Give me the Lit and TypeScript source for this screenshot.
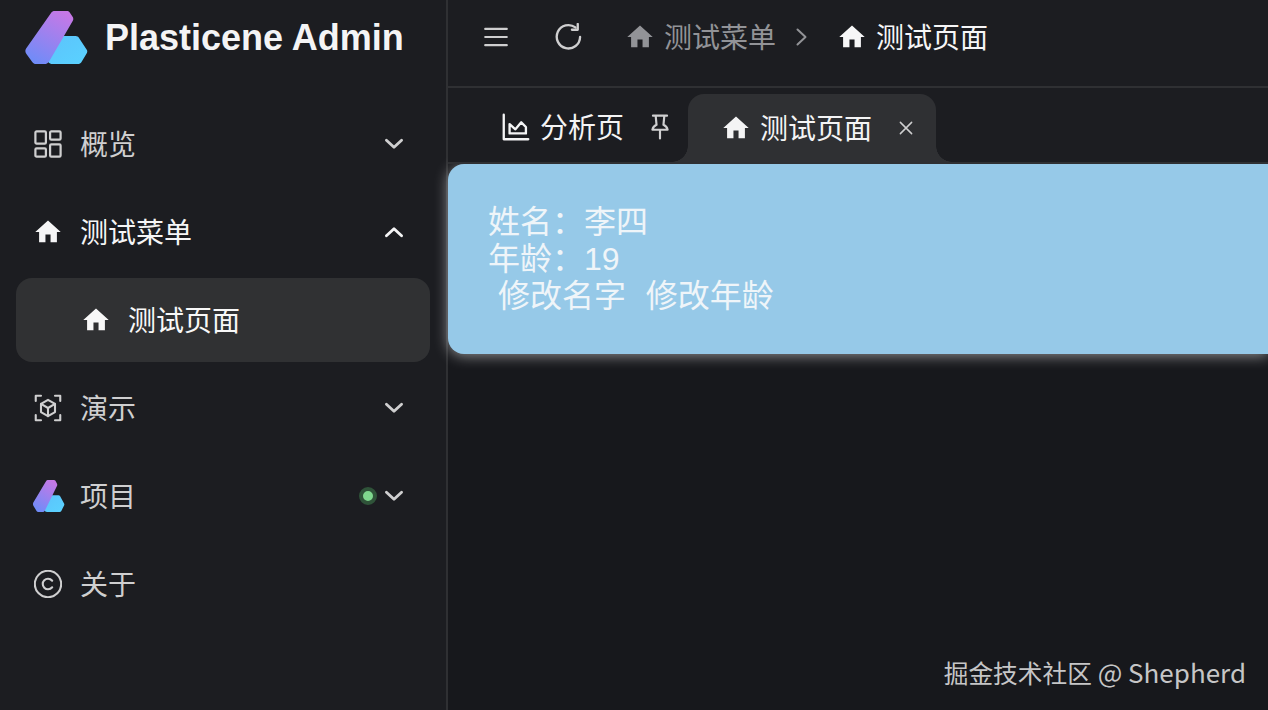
import { LitElement, html, css, svg } from "lit";
import { customElement } from "lit/decorators.js";

const home = svg`<path fill="currentColor" d="M10 20v-6h4v6h5v-8h3L12 3 2 12h3v8z"/>`;
const chevDown = svg`<path fill="none" stroke="currentColor" stroke-width="2.6" stroke-linecap="round" stroke-linejoin="round" d="M5 8.500l7 6.500 7-6.500"/>`;
const chevUp = svg`<path fill="none" stroke="currentColor" stroke-width="2.6" stroke-linecap="round" stroke-linejoin="round" d="M5 15.500l7-6.500 7 6.500"/>`;
const grid = svg`<g fill="none" stroke="currentColor" stroke-width="1.9"><rect x="1.200" y="1.200" width="9" height="10.500" rx="1"/><rect x="1.200" y="15.800" width="9" height="7" rx="1"/><rect x="13.800" y="1.200" width="9" height="7" rx="1"/><rect x="13.800" y="12.300" width="9" height="10.500" rx="1"/></g>`;
const cube = svg`<g fill="none" stroke="currentColor" stroke-width="1.800" stroke-linejoin="round" stroke-linecap="round"><path d="M6 1.500H1.500V6M18 1.500h4.500V6M6 22.500H1.500V18M18 22.500h4.500V18"/><path d="M12 5l6 3.500v7L12 19l-6-3.500v-7z"/><path d="M6 8.500l6 3.500 6-3.500M12 12v7"/></g>`;
const copyright = svg`<g fill="none" stroke="currentColor" stroke-width="1.800"><circle cx="12" cy="12" r="11.300"/><path stroke-linecap="round" d="M15.600 9.200A4.600 4.600 0 0 0 12 7.500a4.500 4.500 0 0 0 0 9 4.600 4.600 0 0 0 3.600-1.700"/></g>`;
const menu = svg`<path fill="none" stroke="currentColor" stroke-width="1.900" stroke-linecap="round" d="M2 4.500h20M2 12h20M2 19.500h20"/>`;
const refresh = svg`<g fill="none" stroke="currentColor" stroke-width="2" stroke-linecap="round" stroke-linejoin="round"><path d="M21.500 12A10 10 0 1 1 17.500 3.800"/><path d="M19.500 0.800v5h-5"/></g>`;
const chevRight = svg`<path fill="none" stroke="currentColor" stroke-width="2" stroke-linecap="round" stroke-linejoin="round" d="M8.500 4.500l8 7.500-8 7.500"/>`;
const chart = svg`<g fill="none" stroke="currentColor" stroke-width="2" stroke-linejoin="round" stroke-linecap="round"><path d="M1.500 1.500v21h21"/><path d="M6.500 17.500v-8l5 4.500 5-6 4 4v5.500z"/></g>`;
const pin = svg`<g fill="none" stroke="currentColor" stroke-width="2" stroke-linejoin="round" stroke-linecap="round"><path d="M5.500 1.500h13M8 1.500l.8 8.500c-2 1-3.300 2.300-3.800 4.500h14c-.5-2.200-1.800-3.500-3.800-4.500l.8-8.500M12 14.500v8"/></g>`;
const close = svg`<path fill="none" stroke="currentColor" stroke-width="2" stroke-linecap="round" d="M4.500 4.500l15 15M19.500 4.500l-15 15"/>`;

const logo = (id: string) => svg`
  <defs>
    <linearGradient id="${id}a" x1="0.75" y1="0" x2="0.25" y2="1"><stop offset="0" stop-color="#c678e6"/><stop offset="1" stop-color="#6f8cf8"/></linearGradient>
    <linearGradient id="${id}b" x1="0" y1="0" x2="1" y2="1"><stop offset="0" stop-color="#5cc3fb"/><stop offset="1" stop-color="#5ad2ff"/></linearGradient>
  </defs>
  <path fill="url(#${id}b)" d="M26 26.500c.9-1.400 1.900-1.900 3.300-1.900h20c1.400 0 2.600.7 3.300 1.900l7.600 11.500c.7 1.100.7 2.300 0 3.400l-5.300 8.800c-.8 1.200-1.900 1.800-3.300 1.800H27c-2.300 0-3.600-.6-4.800-2.300-.9-1.300-.5-3.100.3-4.500z"/>
  <path fill="url(#${id}a)" d="M25.500 1.500c.8-1 1.800-1.500 3-1.500h12c1.200 0 2.300.5 3 1.400l2.800 4.200c.9 1.300.9 3 .1 4.300L23.700 48.700c-1.300 2.100-2.800 3.300-5.300 3.300h-7.500c-1.700 0-3-.5-4-1.800L1 42.200c-1.300-1.700-1.400-3.600-.3-5.500z"/>`;

@customElement("app-root")
export class AppRoot extends LitElement {
  static styles = css`
    :host {
      display: block;
      width: 100%;
      height: 710px;
      overflow: hidden;
      font-family: "Noto Sans CJK SC", "Noto Sans", sans-serif;
    }
    svg { display: block; flex: none; }
    .app { display: flex; height: 710px; background: #17181c; position: relative; overflow: hidden; }
    .side {
      flex: none;
      width: 446px;
      border-right: 2px solid #2f3033;
      background: #1c1d21;
      display: flex;
      flex-direction: column;
      color: #cfcfd0;
    }
    .brand { height: 76px; display: flex; align-items: center; padding-left: 25px; gap: 16px; }
    .brand svg { margin-top: -2px; width: 64px; height: 53px; }
    .brand span {
      font: 700 36px "Liberation Sans", Arial, sans-serif;
      color: #f4f4f5;
      margin-top: -1px;
    }
    .nav { display: flex; flex-direction: column; gap: 4px; padding: 26px 16px 0; }
    .item {
      height: 84px;
      border-radius: 16px;
      display: flex;
      align-items: center;
      padding: 0 23px 0 18px;
      font-size: 28px;
      gap: 18px;
      line-height: 1;
    }
    .item .ic { width: 28px; height: 28px; }
    .item .logo-ic { width: 32px; height: 32px; margin: 0 -3px 0 -1px; }
    .item .label { flex: 1; padding-bottom: 2px; }
    .item .chev { width: 26px; height: 26px; }
    .item.open { color: #f5f5f6; }
    .item.sub { background: #303133; color: #f8f8f8; padding-left: 66px; }
    .dot {
      width: 10px; height: 10px;
      margin-right: -14px;
      border: 4px solid #2f5339;
      background: #7fd88e;
      border-radius: 50%;
      box-sizing: content-box;
    }
    .main { flex: 1; min-width: 0; display: flex; flex-direction: column; }
    .head {
      height: 74px;
      padding-bottom: 12px;
      border-bottom: 2px solid #2f3033;
      background: #1c1d21;
      display: flex;
      align-items: center;
      padding-left: 35px;
      color: #cfcfd0;
      font-size: 28px;
    }
    .head .btn { width: 26px; height: 26px; }
    .head .refresh { width: 28px; height: 28px; margin-left: 46px; margin-right: 43px; }
    .crumb { display: flex; align-items: center; gap: 10px; color: #929397; line-height: 1; }
    .crumb svg { width: 28px; height: 28px; }
    .crumb span { padding-bottom: 2px; }
    .crumb.cur { color: #f6f6f7; }
    .sep { width: 24px; height: 24px; margin: 0 25px 0 13px; color: #929397; }
    .tabs {
      height: 74px;
      border-bottom: 2px solid #2f3033;
      background: #1c1d21;
      display: flex;
      align-items: flex-end;
      padding-left: 54px;
      font-size: 28px;
      color: #f4f4f5;
      line-height: 1;
      position: relative;
      z-index: 1;
    }
    .tab { display: flex; align-items: center; height: 68px; position: relative; }
    .tab span { padding-bottom: 2px; }
    .tab.first { width: 186px; gap: 10px; height: 66px; padding-bottom: 2px; }
    .tab.first .ic { width: 28px; height: 28px; }
    .tab .pin { width: 26px; height: 28px; margin-left: 13px; color: #cfcfd0; }
    .tab.active {
      background: #2f3033;
      width: 248px;
      border-radius: 16px 16px 0 0;
      padding-left: 34px;
      box-sizing: border-box;
      gap: 10px;
    }
    .tab.active::before, .tab.active::after {
      content: "";
      position: absolute;
      bottom: 0;
      width: 16px;
      height: 16px;
    }
    .tab.active::before { left: -16px; background: radial-gradient(circle at 0 0, transparent 15.500px, #2f3033 16px); }
    .tab.active::after { right: -16px; background: radial-gradient(circle at 100% 0, transparent 15.500px, #2f3033 16px); }
    .tab.active .ic { width: 28px; height: 28px; }
    .tab.active .x { width: 18px; height: 18px; margin-left: 15px; color: #cfcfd0; }
    .content { flex: 1; }
    .card {
      height: 190px;
      box-sizing: border-box;
      background: #96c9e8;
      border-radius: 16px 0 0 16px;
      box-shadow: 0 2px 14px rgba(255, 255, 255, 0.5);
      padding: 40px 40px 0;
      color: #eff5f9;
      font: 400 32px/37px "Liberation Sans", "Noto Sans CJK SC", sans-serif;
      word-spacing: 1px;
    }
    .card .row { height: 37px; white-space: pre; }
    .mark {
      position: absolute;
      right: 22px;
      bottom: 19px;
      font-size: 26px;
      line-height: 38px;
      color: #c6c6c7;
    }
    .mark b { font-weight: 400; font-size: 24.700px; }
  `;

  private ic(p: unknown, cls = "ic") {
    return html`<svg class=${cls} viewBox="0 0 24 24">${p}</svg>`;
  }

  private homeIc() {
    return html`<svg class="ic" viewBox="1 1 22 22">${home}</svg>`;
  }

  render() {
    return html`
      <div class="app">
        <aside class="side">
          <div class="brand">
            <svg viewBox="0 0 62 52">${logo("l1")}</svg>
            <span>Plasticene Admin</span>
          </div>
          <nav class="nav">
            <div class="item">${this.ic(grid)}<span class="label">概览</span>${this.ic(chevDown, "chev")}</div>
            <div class="item open">${this.homeIc()}<span class="label">测试菜单</span>${this.ic(chevUp, "chev")}</div>
            <div class="item sub">${this.homeIc()}<span class="label">测试页面</span></div>
            <div class="item">${this.ic(cube)}<span class="label">演示</span>${this.ic(chevDown, "chev")}</div>
            <div class="item">
              <svg class="logo-ic" viewBox="0 0 62 52" preserveAspectRatio="none">${logo("l2")}</svg>
              <span class="label">项目</span><span class="dot"></span>${this.ic(chevDown, "chev")}
            </div>
            <div class="item">${this.ic(copyright)}<span class="label">关于</span></div>
          </nav>
        </aside>
        <main class="main">
          <header class="head">
            ${this.ic(menu, "btn")}
            ${this.ic(refresh, "refresh")}
            <div class="crumb">${this.homeIc()}<span>测试菜单</span></div>
            ${this.ic(chevRight, "sep")}
            <div class="crumb cur">${this.homeIc()}<span>测试页面</span></div>
          </header>
          <div class="tabs">
            <div class="tab first">${this.ic(chart)}<span>分析页</span>${this.ic(pin, "pin")}</div>
            <div class="tab active">${this.homeIc()}<span>测试页面</span>${this.ic(close, "x")}</div>
          </div>
          <div class="content">
            <div class="card">
              <div class="row">姓名：李四</div>
              <div class="row">年龄：19</div>
              <div class="row"> 修改名字  修改年龄</div>
            </div>
          </div>
        </main>
        <div class="mark"><b>掘金技术社区</b> @ Shepherd</div>
      </div>
    `;
  }
}
